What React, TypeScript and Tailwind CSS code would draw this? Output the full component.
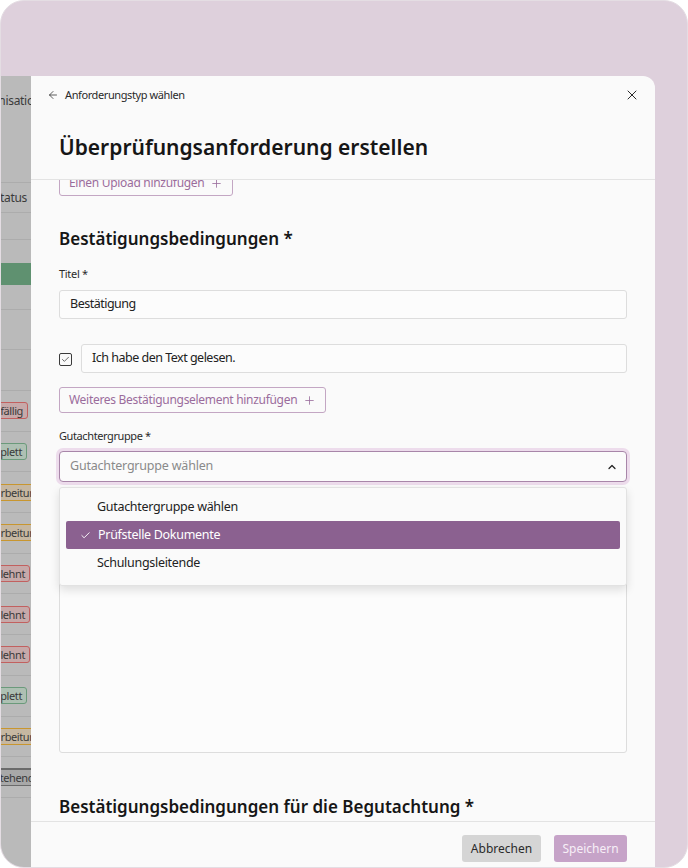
import React from 'react';
import { ArrowLeft, X, Plus, Check, ChevronUp } from 'lucide-react';

type Badge = { label: string; tone: 'red' | 'green' | 'orange' | 'gray'; shift: string };

const badges: Badge[] = [
  { label: 'Überfällig', tone: 'red', shift: 'mr-[3px]' },
  { label: 'Komplett', tone: 'green', shift: 'mr-[4px]' },
  { label: 'In Bearbeitung', tone: 'orange', shift: '-mr-[16px]' },
  { label: 'In Bearbeitung', tone: 'orange', shift: '-mr-[16px]' },
  { label: 'Abgelehnt', tone: 'red', shift: 'mr-[1px]' },
  { label: 'Abgelehnt', tone: 'red', shift: 'mr-[1px]' },
  { label: 'Abgelehnt', tone: 'red', shift: 'mr-[1px]' },
  { label: 'Komplett', tone: 'green', shift: 'mr-[4px]' },
  { label: 'In Bearbeitung', tone: 'orange', shift: '-mr-[16px]' },
  { label: 'Ausstehend', tone: 'gray', shift: '-mr-[8px]' },
];

const toneClass: Record<Badge['tone'], string> = {
  red: 'border-[#c2605f] bg-[#c6a9a9]',
  green: 'border-[#6b9a7b] bg-[#aec0b3]',
  orange: 'border-[#c8962f] bg-[#c6b7a1]',
  gray: 'border-[#6b6b6b] border-t-2 bg-[#a8a8a8]',
};

// dimmed app page peeking out left of the sheet
const BackgroundStrip: React.FC = () => (
  <div className="w-[30px] shrink-0 overflow-hidden bg-[#bababa] text-[12px] tracking-[-0.3px] text-[#3a3a3a]">
    <div className="flex h-[107px] items-start justify-end pt-[16px] border-b border-[#acacac]">
      <span className="-mr-[10px] whitespace-nowrap">Organisation</span>
    </div>
    <div className="flex h-[30px] items-center justify-end border-b border-[#acacac]">
      <span className="mr-[4px] whitespace-nowrap">Status</span>
    </div>
    <div className="h-[27px] border-b border-[#acacac]" />
    <div className="h-[23px]" />
    <div className="h-[22px] bg-[#5f9170]" />
    <div className="h-[25px] border-b border-[#acacac]" />
    <div className="h-[40px] border-b border-[#acacac]" />
    <div className="h-[41px] border-b border-[#acacac]" />
    {badges.map((b, i) => (
      <div key={i} className="flex h-[40.7px] items-center justify-end border-b border-[#acacac]">
        <span
          className={`${b.shift} ${toneClass[b.tone]} whitespace-nowrap rounded-[3px] border px-[4px] text-[11px] leading-[15px] tracking-[-0.4px]`}
        >
          {b.label}
        </span>
      </div>
    ))}
  </div>
);

const OutlineButton: React.FC<{ children: React.ReactNode }> = ({ children }) => (
  <button
    type="button"
    className="flex h-[26px] items-center gap-[6px] rounded-[3px] border border-[#c3a6c3] bg-transparent px-[9px] text-[12px] tracking-[-0.3px] text-[#9a6c9c]"
  >
    {children}
    <Plus className="h-[13px] w-[13px]" strokeWidth={1.5} />
  </button>
);

export default function App() {
  return (
    <div className="h-[868px] w-[688px] bg-white font-['Noto_Sans',sans-serif] text-[#1e1e1e]">
      <div className="flex h-full flex-col overflow-hidden rounded-[24px] border border-[#e4dde3] bg-[#ded0dc] pt-[75px]">
        <div className="flex min-h-0 flex-1">
          <BackgroundStrip />

          <div className="flex w-[624px] shrink-0 flex-col rounded-tr-[12px] bg-[#fafafa]">
            {/* header */}
            <div className="shrink-0 border-b border-[#e3e3e3]">
              <div className="flex items-center justify-between pl-[16px] pr-[15px] pt-[11px]">
                <div className="flex items-center gap-[6px] text-[11px] leading-[16px] tracking-[-0.4px] text-[#2a2a2a]">
                  <ArrowLeft className="h-[12px] w-[12px]" strokeWidth={1.5} />
                  Anforderungstyp wählen
                </div>
                <X className="h-[16px] w-[16px] text-[#2a2a2a]" strokeWidth={1.5} />
              </div>
              <h1 className="px-[28px] pb-[17px] pt-[29px] text-[21px] font-semibold leading-[30px] text-[#161616]">
                Überprüfungsanforderung erstellen
              </h1>
            </div>

            {/* scrolled body */}
            <div className="h-[641px] shrink-0 overflow-hidden px-[28px]">
              <div className="-mt-[10px]">
                <OutlineButton>Einen Upload hinzufügen</OutlineButton>

                <h2 className="mt-[31px] text-[17px] font-semibold leading-[24px] text-[#161616]">
                  Bestätigungsbedingungen *
                </h2>

                <label className="mt-[15px] block text-[11px] leading-[16px] tracking-[-0.3px] text-[#2a2a2a]">Titel *</label>
                <div className="mt-[8px] flex h-[29px] items-center rounded-[3px] border border-[#dddddd] bg-[#fcfcfc] px-[10px] text-[12.5px] tracking-[-0.5px] text-[#222]">
                  Bestätigung
                </div>

                <div className="mt-[25px] flex items-center gap-[9px]">
                  <span className="mt-[2px] flex h-[13px] w-[13px] shrink-0 items-center justify-center rounded-[2px] border border-[#3a3a3a]">
                    <Check className="h-[9px] w-[9px] text-[#3a3a3a]" strokeWidth={2} />
                  </span>
                  <div className="flex h-[29px] flex-1 items-center rounded-[3px] border border-[#dddddd] bg-[#fcfcfc] px-[10px] text-[12.5px] tracking-[-0.5px] text-[#222]">
                    Ich habe den Text gelesen.
                  </div>
                </div>

                <div className="mt-[14px]">
                  <OutlineButton>Weiteres Bestätigungselement hinzufügen</OutlineButton>
                </div>

                <label className="mt-[15px] block text-[11px] leading-[16px] tracking-[-0.4px] text-[#2a2a2a]">Gutachtergruppe *</label>
                <div className="relative mt-[7px]">
                  <div className="flex h-[31px] items-center justify-between rounded-[4px] border border-[#a886a9] bg-[#fbfbfb] pl-[10px] pr-[8px] text-[12.5px] tracking-[-0.2px] text-[#8a8a8a] shadow-[0_0_0_3px_#eddcec]">
                    Gutachtergruppe wählen
                    <ChevronUp className="h-[12px] w-[12px] text-[#222]" strokeWidth={2.5} />
                  </div>

                  <div className="absolute left-0 right-0 top-[36px] z-10 rounded-[3px] border border-[#e2e2e2] bg-[#fafafa] pb-[8px] pt-[5px] text-[12.5px] tracking-[-0.3px] shadow-[0_4px_10px_rgba(0,0,0,0.12)]">
                    <div className="flex h-[28px] items-center pl-[37px] text-[#222]">Gutachtergruppe wählen</div>
                    <div className="mx-[6px] flex h-[28px] items-center gap-[7px] rounded-[2px] bg-[#8b6190] pl-[14px] text-white">
                      <Check className="h-[11px] w-[11px]" strokeWidth={2} />
                      Prüfstelle Dokumente
                    </div>
                    <div className="flex h-[28px] items-center pl-[37px] text-[#222]">Schulungsleitende</div>
                  </div>
                </div>

                <div className="mt-[14px] h-[257px] rounded-[3px] border border-[#dddddd] bg-[#fcfcfc]" />

                <h2 className="mt-[42px] text-[17px] font-semibold leading-[24px] text-[#161616]">
                  Bestätigungsbedingungen für die Begutachtung *
                </h2>
              </div>
            </div>

            {/* footer */}
            <div className="flex shrink-0 justify-end gap-[13px] border-t border-[#e3e3e3] px-[28px] pb-[20px] pt-[13px]">
              <button type="button" className="h-[27px] w-[79px] rounded-[3px] bg-[#d5d5d5] text-[12px] text-[#2a2a2a]">
                Abbrechen
              </button>
              <button type="button" className="h-[27px] w-[73px] rounded-[3px] bg-[#c6a3c8] text-[12px] text-[#f7eff7]">
                Speichern
              </button>
            </div>
          </div>
        </div>
      </div>
    </div>
  );
}
